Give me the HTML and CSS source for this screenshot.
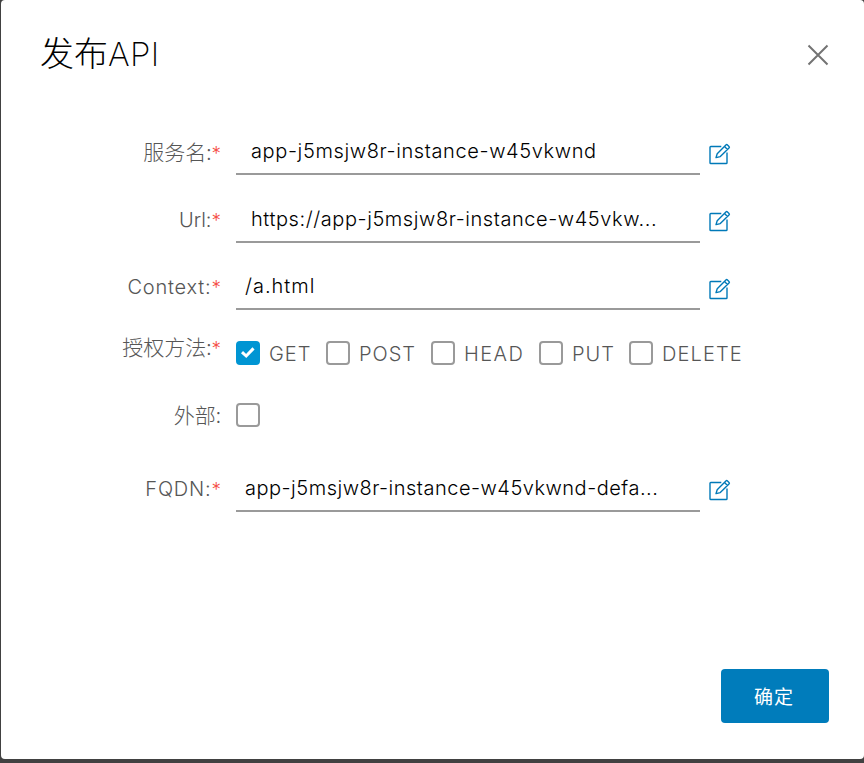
FILE: index.html
```html
<!DOCTYPE html>
<html lang="zh-CN">
<head>
<meta charset="utf-8">
<title>发布API</title>
<link rel="stylesheet" href="styles.css">
</head>
<body>
<svg class="defs" aria-hidden="true">
  <symbol id="edit" viewBox="0 0 22 22">
    <path d="M12.3 3.5H1.8Q1 3.5 1 4.3V19.7Q1 20.5 1.8 20.5H17.2Q18 20.5 18 19.7V9.5"/>
    <path d="M7 14.6L8.2 10.7L16.9 2Q17.7 1.2 18.5 2L20 3.5Q20.8 4.3 20 5.1L11.3 13.6ZM15.5 3.5L18.5 6.5"/>
  </symbol>
</svg>
<main class="modal">
  <header class="header">
    <h1 class="title">发布<span class="latin">API</span></h1>
    <svg class="close" viewBox="0 0 22 22"><path d="M1.5 1.5L20.5 20.5M20.5 1.5L1.5 20.5"/></svg>
  </header>
  <form class="form">
    <div class="row">
      <label class="label cjk">服务名:<i>*</i></label>
      <div class="field indent"><span class="value service">app-j5msjw8r-instance-w45vkwnd</span></div>
      <svg class="edit"><use href="#edit"/></svg>
    </div>
    <div class="row url-row">
      <label class="label">Url:<i>*</i></label>
      <div class="field indent"><span class="value url">https://app-j5msjw8r-instance-w45vkw...</span></div>
      <svg class="edit"><use href="#edit"/></svg>
    </div>
    <div class="row context-row">
      <label class="label context">Context:<i>*</i></label>
      <div class="field"><span class="value path">/a.html</span></div>
      <svg class="edit"><use href="#edit"/></svg>
    </div>
    <div class="row methods-row">
      <label class="label cjk">授权方法:<i>*</i></label>
      <div class="methods">
        <span class="option get"><span class="box checked"><svg viewBox="0 0 24 24"><path d="M6 11.2L10.2 15L17.5 7.4"/></svg></span><span>GET</span></span>
        <span class="option post"><span class="box"></span><span>POST</span></span>
        <span class="option head"><span class="box"></span><span>HEAD</span></span>
        <span class="option put"><span class="box"></span><span>PUT</span></span>
        <span class="option delete"><span class="box"></span><span>DELETE</span></span>
      </div>
    </div>
    <div class="row external-row">
      <label class="label cjk">外部:</label>
      <span class="box"></span>
    </div>
    <div class="row fqdn-row">
      <label class="label fqdn">FQDN:<i>*</i></label>
      <div class="field"><span class="value domain">app-j5msjw8r-instance-w45vkwnd-defa...</span></div>
      <svg class="edit"><use href="#edit"/></svg>
    </div>
  </form>
  <footer class="footer"><button class="confirm">确定</button></footer>
</main>
</body>
</html>
```
FILE: styles.css
```css
* { box-sizing: border-box; }
body { margin: 0; height: 763px; padding: 0 0 4px 1px; background: #414141; overflow: hidden; font-family: Inter, "Noto Sans CJK SC", sans-serif; font-size: 20px; font-weight: 300; }
.defs { position: absolute; width: 0; height: 0; }
.modal { display: flex; flex-direction: column; height: 759px; background: #fff; border-radius: 4px; }
.header { display: flex; justify-content: space-between; align-items: flex-start; height: 128px; padding: 32px 35px 0 39px; }
.title { margin: 0; font-size: 34px; line-height: 40px; font-weight: 300; color: #000; white-space: nowrap; font-family: "Noto Sans CJK SC", sans-serif; }
.latin { font-family: Inter, sans-serif; font-size: 33px; font-weight: 250; letter-spacing: .4px; }
.close { width: 22px; height: 22px; margin-top: 12px; fill: none; stroke: #737373; stroke-width: 2; }
.form { flex: 1; }
.row { display: grid; grid-template-columns: 220px 464px 22px; column-gap: 15px; height: 47px; align-items: start; }
.url-row { margin-top: 21px; }
.context-row { margin-top: 20px; }
.methods-row { grid-template-columns: 220px auto; height: 24px; margin-top: 31px; }
.external-row { height: 24px; margin-top: 38px; }
.fqdn-row { margin-top: 38px; }
.label { padding-top: 9px; line-height: 30px; text-align: right; color: #565656; white-space: nowrap; }
.label i { font-family: Inter, sans-serif; font-size: 19px; font-style: normal; line-height: 1; letter-spacing: 0; color: #f54f47; }
.context { letter-spacing: .8px; }
.fqdn { letter-spacing: .8px; }
.cjk { padding-top: 8px; font-family: "Noto Sans CJK SC", sans-serif; font-size: 21px; }
.methods-row .label { padding: 0; margin-top: -10px; }
.external-row .label { padding: 0; margin-top: -4px; }
.field { height: 47px; padding: 8px 0 0 9px; border-bottom: 2px solid #9a9a9a; line-height: 30px; color: #000; white-space: nowrap; }
.indent { padding-left: 15px; }
.service { letter-spacing: .62px; }
.url { letter-spacing: .57px; }
.path { letter-spacing: 1px; }
.domain { letter-spacing: .5px; }
.edit { width: 22px; height: 22px; margin: 15px 0 0 -6px; fill: none; stroke: #0079b8; stroke-width: 1.4; stroke-linejoin: round; }
.url-row .edit, .fqdn-row .edit { margin-top: 14px; }
.methods { display: flex; color: #565656; letter-spacing: 1px; }
.option { display: flex; gap: 9px; line-height: 27px; white-space: nowrap; }
.get { width: 90px; }
.post { width: 105px; }
.head { width: 108px; letter-spacing: 1.4px; }
.put { width: 90px; }
.delete { letter-spacing: 1.1px; }
.box { flex: none; width: 24px; height: 24px; border: 2px solid #9a9a9a; border-radius: 4px; }
.checked { border: 0; background: #0095d3; }
.checked svg { display: block; width: 24px; height: 24px; fill: none; stroke: #fff; stroke-width: 3; }
.footer { display: flex; justify-content: flex-end; padding: 0 35px 36px 0; }
.confirm { width: 108px; height: 54px; padding: 0 2px 2px 0; border: 0; border-radius: 4px; background: #007cbb; color: #fff; font: 400 19px "Noto Sans CJK SC", sans-serif; letter-spacing: 1px; }
```
